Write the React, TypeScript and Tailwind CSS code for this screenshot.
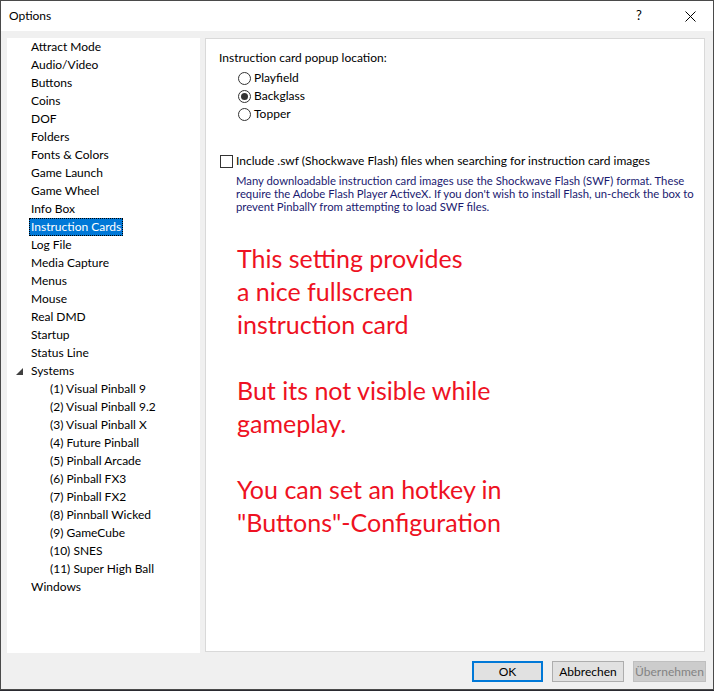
import React from "react";

const topItems = [
  "Attract Mode",
  "Audio/Video",
  "Buttons",
  "Coins",
  "DOF",
  "Folders",
  "Fonts & Colors",
  "Game Launch",
  "Game Wheel",
  "Info Box",
  "Instruction Cards",
  "Log File",
  "Media Capture",
  "Menus",
  "Mouse",
  "Real DMD",
  "Startup",
  "Status Line",
];

const systems = [
  "(1) Visual Pinball 9",
  "(2) Visual Pinball 9.2",
  "(3) Visual Pinball X",
  "(4) Future Pinball",
  "(5) Pinball Arcade",
  "(6) Pinball FX3",
  "(7) Pinball FX2",
  "(8) Pinnball Wicked",
  "(9) GameCube",
  "(10) SNES",
  "(11) Super High Ball",
];

function Radio({ label, checked }: { label: string; checked?: boolean }) {
  return (
    <div className="flex items-center h-[18px]">
      <span className="w-[13px] h-[13px] rounded-full border border-[#333] bg-white flex items-center justify-center">
        {checked && <span className="w-[7px] h-[7px] rounded-full bg-[#333]" />}
      </span>
      <span className="ml-[3px]">{label}</span>
    </div>
  );
}

export default function App() {
  return (
    <div className="w-[714px] h-[691px] bg-[#2a2a30] font-['Segoe_UI','Lato','Liberation_Sans',sans-serif] text-[12px] text-black">
      <div className="w-[714px] h-[690px] border border-[#4a4a4a] bg-[#f0f0f0] flex flex-col">
        {/* title bar */}
        <div className="h-[30px] bg-white flex items-center pl-[8px]">
          <span className="flex-1">Options</span>
          <span className="w-[46px] text-center text-[13px] -translate-x-[5px]">?</span>
          <span className="w-[46px] flex justify-center">
            <svg width="11" height="11" viewBox="0 0 11 11">
              <path d="M0.5 0.5 L10.5 10.5 M10.5 0.5 L0.5 10.5" stroke="#000" strokeWidth="1" />
            </svg>
          </span>
        </div>

        <div className="flex pt-[7px] pl-[6px] pr-[7px] gap-[5px] h-[615px] box-content">
          {/* tree */}
          <div className="w-[193px] bg-white">
            {topItems.map((t) => (
              <div key={t} className="h-[18px] leading-[18px] pl-[24px]">
                {t === "Instruction Cards" ? (
                  <span className="inline-block h-[18px] px-[2px] -ml-[2px] bg-[#0078d7] text-white outline-1 outline-dotted outline-[#000] -outline-offset-1">
                    {t}
                  </span>
                ) : (
                  t
                )}
              </div>
            ))}
            <div className="h-[18px] leading-[18px] flex items-center pl-[9px]">
              <svg width="7" height="7" viewBox="0 0 7 7" className="mr-[8px]">
                <path d="M7 0 L7 7 L0 7 Z" fill="#404040" />
              </svg>
              Systems
            </div>
            {systems.map((s) => (
              <div key={s} className="h-[18px] leading-[18px] pl-[43px]">
                {s}
              </div>
            ))}
            <div className="h-[18px] leading-[18px] pl-[24px]">Windows</div>
          </div>

          {/* content */}
          <div className="w-[500px] h-[614px] bg-white border border-[#d9d9d9] pl-[13px] pt-[10px]">
            <div className="h-[18px] leading-[18px]">Instruction card popup location:</div>
            <div className="pl-[19px] mt-[2px]">
              <Radio label="Playfield" />
              <Radio label="Backglass" checked />
              <Radio label="Topper" />
            </div>
            <div className="flex items-center mt-[29px] h-[18px]">
              <span className="w-[13px] h-[13px] border border-[#333] bg-white ml-[1px]" />
              <span className="ml-[3px]">Include .swf (Shockwave Flash) files when searching for instruction card images</span>
            </div>
            <div className="pl-[17px] pr-[2px] mt-[4px] text-[#1a1a70] leading-[13px] text-[11.3px]">
              Many downloadable instruction card images use the Shockwave Flash (SWF) format. These require the Adobe Flash Player ActiveX. If you don't wish to install Flash, un-check the box to prevent PinballY from attempting to load SWF files.
            </div>
            <div className="mt-[29px] ml-[18px] text-[#ee1122] text-[25px] leading-[33px] font-['Lato',sans-serif]">
              <div>This setting provides</div>
              <div>a nice fullscreen</div>
              <div>instruction card</div>
              <div className="h-[33px]" />
              <div>But its not visible while</div>
              <div>gameplay.</div>
              <div className="h-[33px]" />
              <div>You can set an hotkey in</div>
              <div>"Buttons"-Configuration</div>
            </div>
          </div>
        </div>

        {/* buttons */}
        <div className="flex justify-end gap-[9px] pr-[7px] mt-[8px]">
          <button className="w-[71px] h-[21px] bg-[#e1e1e1] border-2 border-[#0078d7] leading-none">OK</button>
          <button className="w-[72px] h-[21px] bg-[#e1e1e1] border border-[#adadad] leading-none">Abbrechen</button>
          <button className="w-[73px] h-[21px] bg-[#cccccc] border border-[#bfbfbf] text-[#838383] leading-none">Übernehmen</button>
        </div>
      </div>
    </div>
  );
}
